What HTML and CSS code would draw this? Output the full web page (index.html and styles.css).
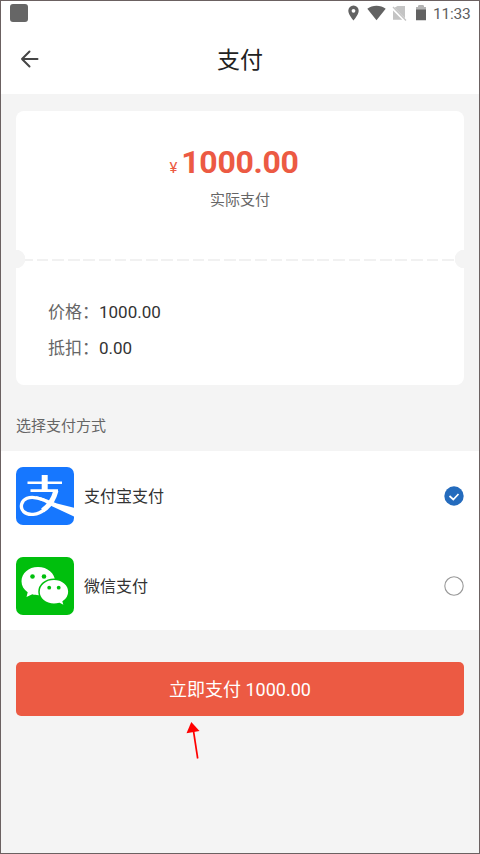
FILE: index.html
```html
<!DOCTYPE html>
<html lang="zh-CN">
<head>
<meta charset="utf-8">
<title>支付</title>
<link rel="stylesheet" href="styles.css">
</head>
<body>
<div class="screen">
  <div class="status">
    <span class="app-dot"></span>
    <svg class="status-icons" width="82" height="20" viewBox="0 0 82 20">
      <path fill="#626262" fill-rule="evenodd" d="M6.500 4.500a5.200 5.200 0 0 0-5.200 5.200c0 3.900 5.200 9.800 5.200 9.800s5.200-5.900 5.200-9.800a5.200 5.200 0 0 0-5.200-5.200zm0 3.400a1.900 1.900 0 1 1 0 3.800a1.900 1.900 0 0 1 0-3.800z"/>
      <path fill="#626262" d="M20.300 7.800c5-4.200 13.400-4.200 18.400 0L29.500 19.200z"/>
      <path fill="#c4c4c4" d="M50.500 5h7.500v12.200L47.500 6.800zM46 9.500l9.200 9.300H46z"/>
      <path stroke="#c4c4c4" stroke-width="1.300" d="M46 6l13 13.500"/>
      <path fill="#626262" d="M71.500 4.500h5V6H79V19.300H69V6h2.500z"/>
      <path fill="#b3b3b3" d="M69 6h2.500V4.500h5V6H79v2.500H69z"/>
    </svg>
    <span class="clock">11:33</span>
  </div>
  <header class="header">
    <svg class="back" width="20" height="20" viewBox="0 0 20 20" fill="none" stroke="#454545" stroke-width="2" stroke-linecap="round" stroke-linejoin="round"><path d="M9.500 2.500L2 10l7.500 7.500M2 10h15.500"/></svg>
    <h1 class="title">支付</h1>
  </header>
  <main>
    <section class="card">
      <div class="total"><span class="yen">¥</span><span class="amount">1000.00</span></div>
      <div class="caption">实际支付</div>
      <div class="tear"></div>
      <dl class="details">
        <div class="detail"><dt>价格：</dt><dd>1000.00</dd></div>
        <div class="detail"><dt>抵扣：</dt><dd>0.00</dd></div>
      </dl>
    </section>
    <h2 class="section-title">选择支付方式</h2>
    <section class="methods">
      <div class="method">
        <svg class="logo" width="58" height="58" viewBox="0 0 58 58">
          <rect width="58" height="58" rx="7" fill="#1677ff"/>
          <g fill="none" stroke="#fff">
            <path stroke-width="2.600" d="M11.500 15.800H46M14.500 23.600H42"/>
            <path stroke-width="6" d="M28.700 8v16"/>
            <path stroke-width="5" d="M40 23.500C37.500 33 32 40 26.500 43.500"/>
            <path stroke-width="3.300" d="M29 42C22 48.500 12 49 7.500 44.500C3.500 40 5.500 33.500 11 31.300C16 29.300 21.500 30.500 28 33"/>
          </g>
          <path fill="#fff" d="M20 29.300C27 30.300 34 34 41 36.500L58 40.800V49.500L36.500 39.500C30 36 25 33 20 31.500z"/>
        </svg>
        <span class="name">支付宝支付</span>
        <svg class="radio" width="20" height="20" viewBox="0 0 20 20"><circle cx="10" cy="10" r="9.700" fill="#246bbd"/><path d="M5.500 10l3.800 3.500L14.500 8" fill="none" stroke="#fff" stroke-width="1.700"/></svg>
      </div>
      <div class="method">
        <svg class="logo" width="58" height="58" viewBox="0 0 58 58">
          <rect width="58" height="58" rx="7" fill="#00bf0d"/>
          <path fill="#fff" d="M22 10C12.500 10 5.500 16.300 5.500 24.300c0 4.500 2.300 8.200 6.200 11L10.500 40l5.800-2.700c2 .6 4 .9 6.500.9c9.300 0 16.200-6.300 16.200-14C39 16.300 31.500 10 22 10z"/>
          <path fill="#fff" stroke="#00bf0d" stroke-width="1.500" d="M38 22.200c-8.500 0-15 5.500-15 12.500s6.500 12.600 15 12.600c2 0 3.800-.3 5.500-.8l5 2.600-1.300-4.500c3.500-2.400 5.700-5.800 5.700-9.900c0-7-6.500-12.500-14.900-12.500z"/>
          <g fill="#00bf0d"><circle cx="16.500" cy="19.500" r="2.300"/><circle cx="28" cy="19.500" r="2.300"/><circle cx="33.200" cy="30.700" r="1.900"/><circle cx="42.700" cy="30.700" r="1.900"/></g>
        </svg>
        <span class="name">微信支付</span>
        <svg class="radio" width="20" height="20" viewBox="0 0 20 20"><circle cx="10" cy="10" r="9.200" fill="#fff" stroke="#999" stroke-width="1.100"/></svg>
      </div>
    </section>
    <button class="pay">立即支付 1000.00</button>
    <svg class="pointer" width="16" height="40" viewBox="0 0 16 40"><path d="M7.500 10L11.700 37.500" stroke="red" stroke-width="1.700"/><path d="M5.300 1L13.500 10L.5 12.300z" fill="red"/></svg>
  </main>
</div>
</body>
</html>
```
FILE: styles.css
```css
* {
  box-sizing: border-box;
}

body {
  margin: 0;
  font-family: Roboto, "Noto Sans CJK SC", sans-serif;
  color: #333;
}

.screen {
  height: 854px;
  border: 1px solid #6b6161;
  background: #f4f4f4;
  overflow: hidden;
}

.status {
  display: flex;
  align-items: flex-start;
  height: 25px;
  padding-left: 9px;
  background: #fff;
}

.app-dot {
  width: 18px;
  height: 18px;
  margin-top: 3px;
  border-radius: 3px;
  background: #666;
}

.status-icons {
  margin-left: auto;
}

.clock {
  width: 38px;
  margin: 3px 8px 0 4px;
  font-size: 15.500px;
  line-height: 20px;
  letter-spacing: -0.200px;
  color: #606060;
  white-space: nowrap;
}

.header {
  display: grid;
  grid-template-columns: 60px 1fr 60px;
  align-items: center;
  height: 68px;
  background: #fff;
}

.back {
  margin: -2px 0 0 19px;
}

.title {
  margin: 2px 0 0;
  font-size: 23px;
  font-weight: 400;
  line-height: 34px;
  text-align: center;
  color: #222;
}

.card {
  height: 274px;
  margin: 17px 15px 0;
  padding-top: 31px;
  border-radius: 8px;
  background: #fff;
  overflow: hidden;
}

.total {
  display: flex;
  align-items: baseline;
  justify-content: center;
  height: 40px;
  padding-right: 12px;
  line-height: 40px;
  color: #ec5a43;
}

.yen {
  margin-right: 4px;
  font-size: 15px;
}

.amount {
  font-size: 32px;
  font-weight: 700;
  letter-spacing: -0.300px;
}

.caption {
  height: 24px;
  margin-top: 6px;
  font-size: 15px;
  line-height: 24px;
  text-align: center;
  color: #666;
}

.tear {
  height: 20px;
  margin-top: 37px;
  background:
    radial-gradient(circle at 0 50%, #f4f4f4 9px, transparent 9.500px) left / 12px 20px no-repeat,
    radial-gradient(circle at 100% 50%, #f4f4f4 9px, transparent 9.500px) right / 12px 20px no-repeat,
    repeating-linear-gradient(90deg, #f1f1f1 0 11.700px, #fff 11.700px 15.600px) 4.800px 10px / 434px 2px no-repeat;
}

.details {
  margin: 25px 0 0 32px;
}

.detail {
  display: flex;
  height: 36px;
  font-size: 17px;
  line-height: 37px;
}

.detail dt {
  width: 51px;
  color: #666;
}

.detail dd {
  margin: 0;
}

.section-title {
  height: 24px;
  margin: 29px 15px 13px;
  font-size: 15px;
  font-weight: 400;
  line-height: 24px;
  color: #666;
}

.methods {
  height: 179px;
  background: #fff;
}

.method {
  display: flex;
  align-items: center;
  height: 90px;
  padding: 0 15px;
}

.name {
  margin: -2px 0 0 10px;
  font-size: 16px;
}

.radio {
  margin-left: auto;
}

.pay {
  display: block;
  width: 448px;
  height: 54px;
  margin: 32px 15px 0;
  padding: 0 0 2px;
  border: 0;
  border-radius: 5px;
  background: #ec5a43;
  color: #fff;
  font: inherit;
  font-size: 18px;
}

.pointer {
  display: block;
  margin: 5px 0 0 185px;
}
```
